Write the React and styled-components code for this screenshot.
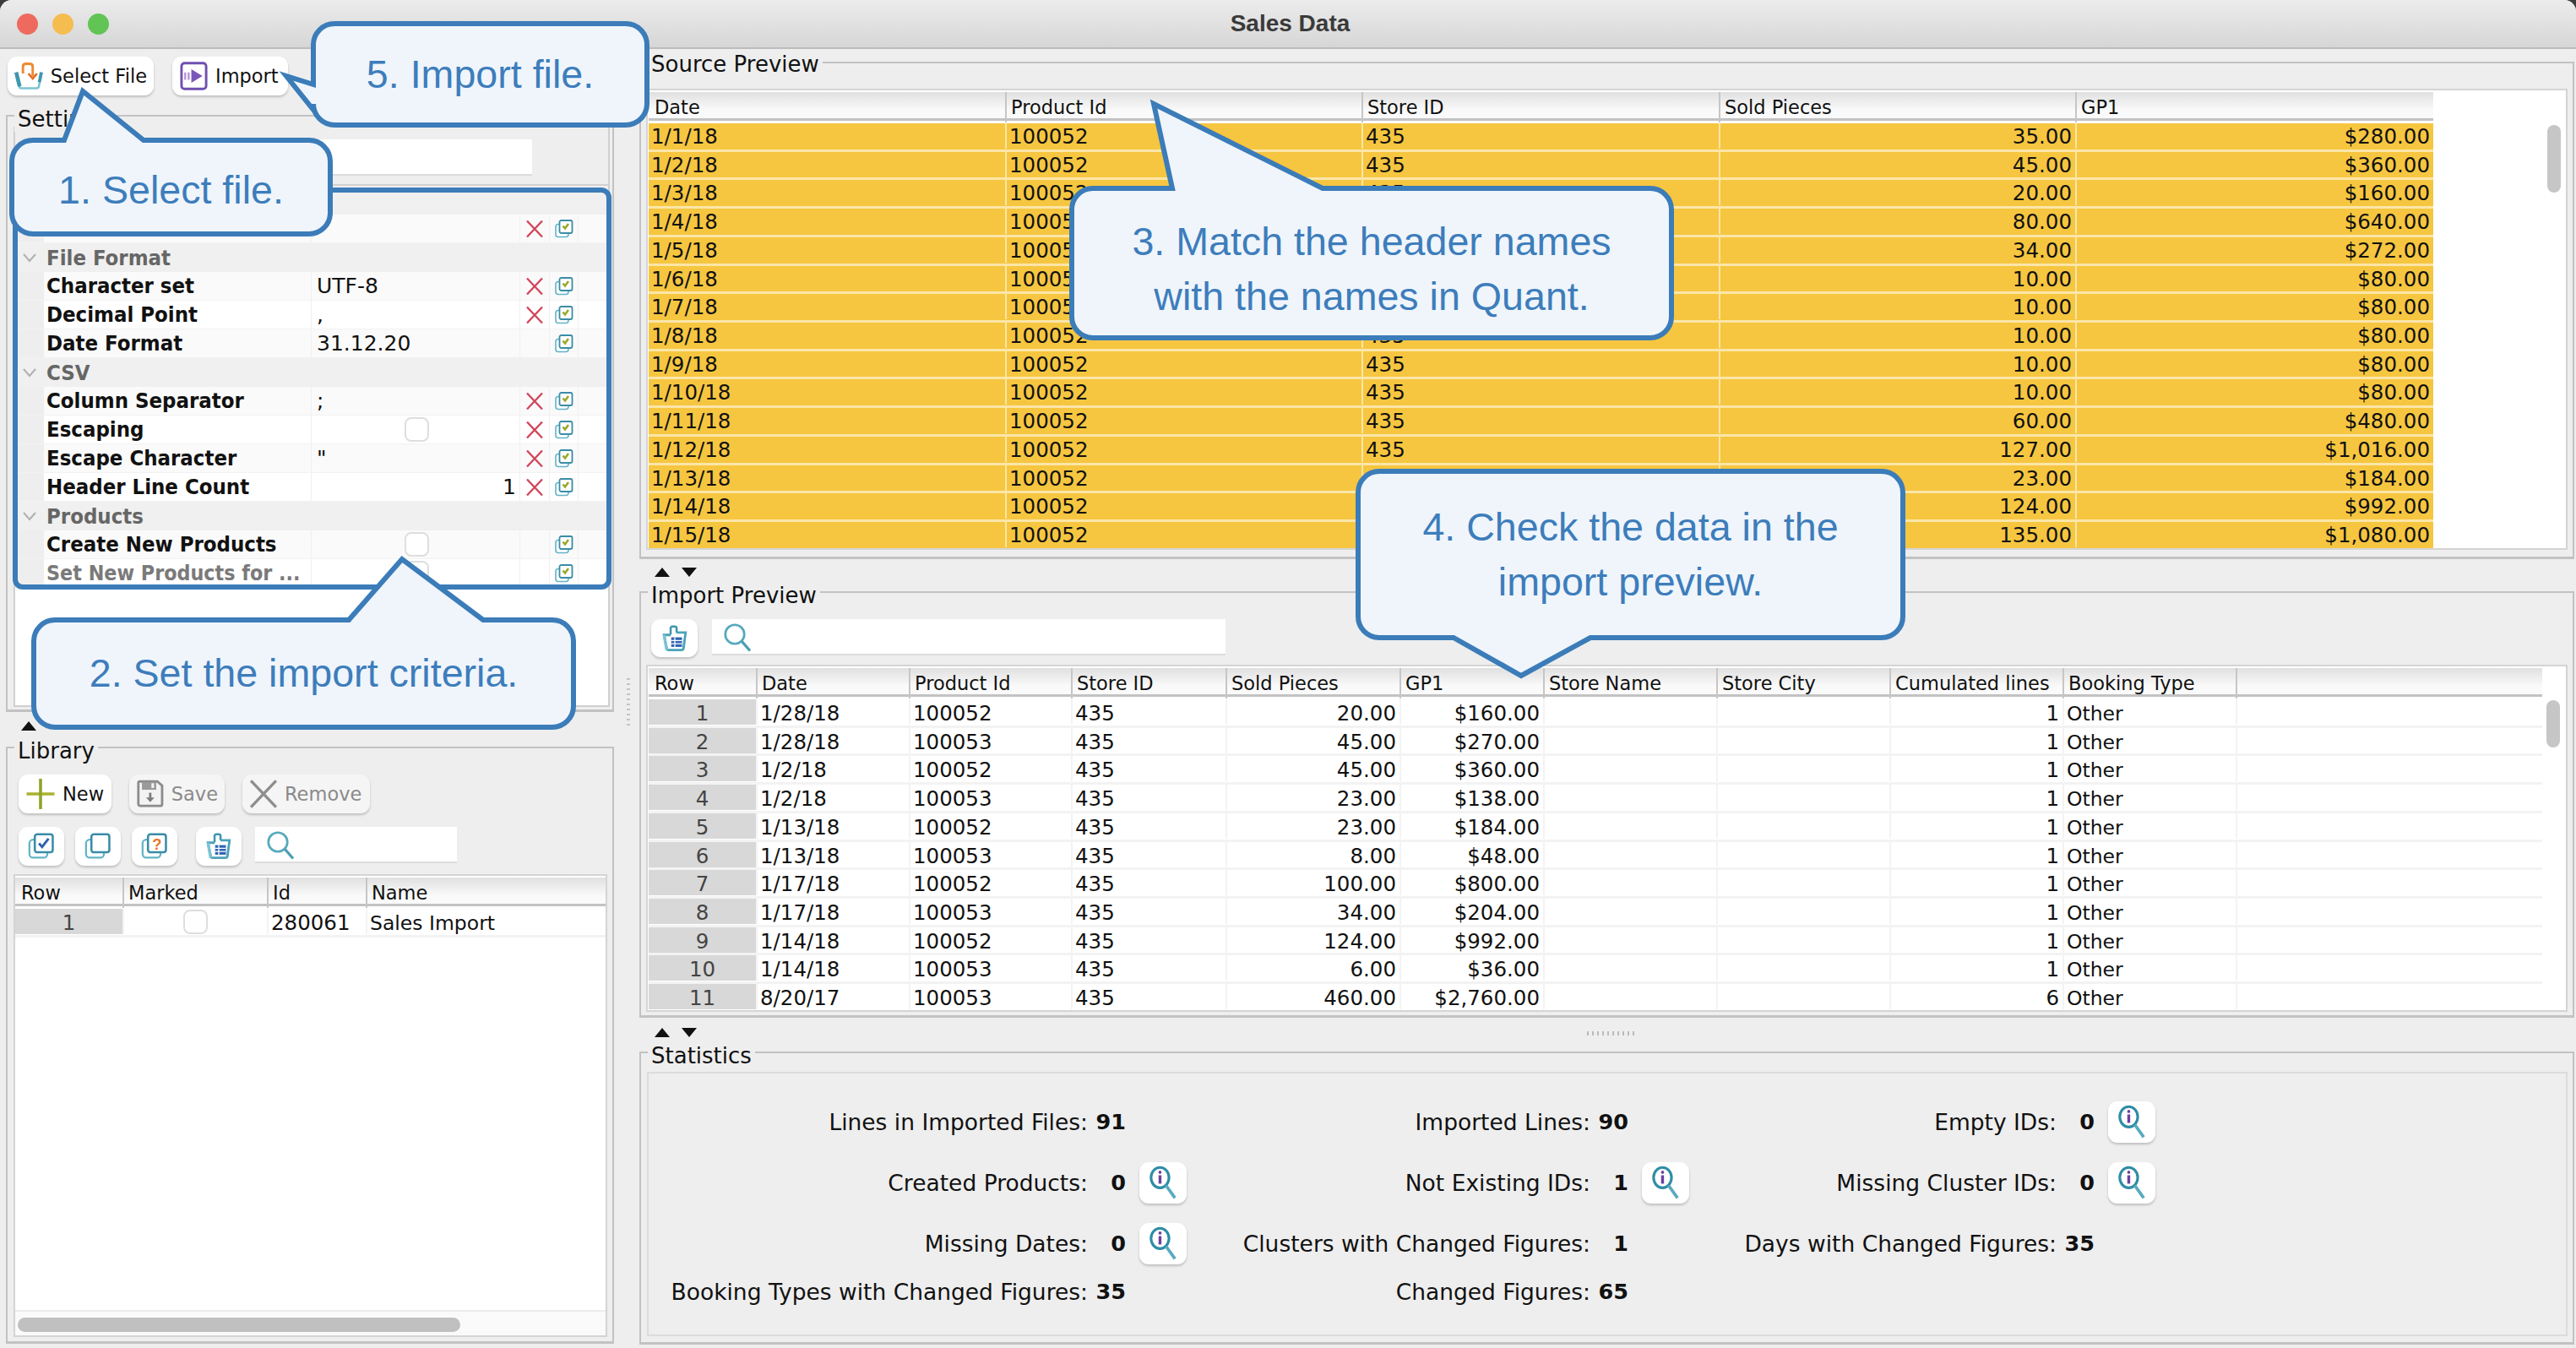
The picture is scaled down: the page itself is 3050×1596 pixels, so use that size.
import React from 'react'
import styled, { createGlobalStyle, css } from 'styled-components'

const GlobalStyle = createGlobalStyle`
  html, body { margin: 0; padding: 0; background: #3c3c3c; }
  * { box-sizing: border-box; }
  body { font-family: "DejaVu Sans", "Liberation Sans", sans-serif; color: #111; }
`

const Window = styled.div`
  position: relative;
  width: 3050px;
  height: 1596px;
  background: #eeeeee;
  border-radius: 14px 14px 0 0;
  overflow: hidden;
`

const TitleBar = styled.div`
  height: 58px;
  display: flex;
  align-items: center;
  padding: 0 20px;
  background: linear-gradient(#ececec, #d6d6d6);
  border-bottom: 2px solid #bcbcbc;
  position: relative;
`

const Lights = styled.div`
  display: flex;
  gap: 17px;
`

const Light = styled.span`
  width: 25px;
  height: 25px;
  border-radius: 50%;
  background: ${p => p.$color};
`

const TitleText = styled.div`
  flex: 1;
  text-align: center;
  font-family: "Liberation Sans", sans-serif;
  font-weight: 700;
  font-size: 28px;
  color: #3a3a3a;
  padding-right: 84px;
  margin-left: -20px;
`

const Body = styled.div`
  display: flex;
  height: 1538px;
`

const LeftColumn = styled.div`
  width: 730px;
  padding-left: 7px;
  display: flex;
  flex-direction: column;
`

const Toolbar = styled.div`
  display: flex;
  gap: 22px;
  height: 78px;
  padding: 9px 0 0 2px;
`

const Button = styled.div`
  height: ${p => p.$h || 46}px;
  width: ${p => p.$w}px;
  flex: none;
  display: flex;
  align-items: center;
  justify-content: ${p => (p.$w < 60 ? 'center' : 'flex-start')};
  gap: 8px;
  margin-right: ${p => p.$mr || 0}px;
  padding: ${p => (p.$w < 60 ? '0' : '0 8px')};
  background: ${p => (p.$off ? '#f5f5f5' : '#ffffff')};
  color: ${p => (p.$off ? '#8a8a8a' : '#111')};
  border-radius: 11px;
  box-shadow: 0 2px 3px rgba(0, 0, 0, 0.2);
  font-size: 22.5px;
  white-space: nowrap;
`

const Group = styled.section`
  position: relative;
  flex: none;
  width: ${p => p.$w}px;
  height: ${p => p.$h}px;
  border: 2px solid #c2c2c2;
  border-bottom-width: 3px;
  padding: ${p => p.$pad};
  display: flex;
  flex-direction: column;
`

const Legend = styled.div`
  position: absolute;
  top: ${p => p.$top || -12}px;
  left: 8px;
  padding: 0 4px;
  height: 30px;
  line-height: 30px;
  font-size: 26px;
  background: #eeeeee;
  color: #111;
`

const SplitRow = styled.div`
  flex: none;
  height: ${p => p.$h}px;
  display: flex;
  align-items: flex-start;
  gap: 14px;
  padding: ${p => p.$pad};
`

const Arrow = styled.span`
  width: 0;
  height: 0;
  border-left: 9px solid transparent;
  border-right: 9px solid transparent;
  ${p => (p.$down
    ? css`border-top: 11px solid #111;`
    : css`border-bottom: 11px solid #111;`)}
`

const HGrip = styled.div`
  width: 56px;
  height: 5px;
  margin: 4px 0 0 ${p => p.$left}px;
  background: repeating-linear-gradient(90deg, #bbb 0 2px, transparent 2px 6px);
`

const VSplit = styled.div`
  width: 27px;
  flex: none;
  padding: 745px 0 0 12px;
`

const VGrip = styled.div`
  width: 4px;
  height: 56px;
  background: repeating-linear-gradient(#c4c4c4 0 2px, transparent 2px 6px);
`

const SettingsPane = styled.div`
  flex: 1;
  display: flex;
  flex-direction: column;
  border: 2px solid #d0d0d0;
  border-top: none;
`

const FileRow = styled.div`
  height: 70px;
  flex: none;
  padding: 15px 0 0 130px;
`

const SearchField = styled.div`
  width: ${p => p.$w}px;
  height: ${p => p.$h || 43}px;
  flex: none;
  display: flex;
  align-items: center;
  padding-left: ${p => p.$pad || 12}px;
  background: #ffffff;
  border-bottom: 2px solid #dcdcdc;
`

const PropertyPane = styled.div`
  flex: 1;
  background: #ffffff;
  border-top: 2px solid #d0d0d0;
  margin-top: -2px;
`

const PropRow = styled.div`
  display: grid;
  grid-template-columns: 34px 317px 247px 35px 34px 1fr;
  height: 34px;
  background: ${p => (p.$alt ? '#fafafa' : '#ffffff')};
  border-bottom: 1px solid #f2f2f2;
  overflow: hidden;
`

const PropGroupRow = styled.div`
  display: flex;
  align-items: center;
  height: 34px;
  background: #f0f0f0;
  font-size: 25.5px;
  font-weight: 700;
  font-stretch: condensed;
  color: #666;
`

const Chevron = styled.span`
  width: 37px;
  flex: none;
  display: flex;
  justify-content: center;
  padding-right: 3px;
  color: #aaa;
`

const Gutter = styled.div`
  background: #eeeeee;
`

const PropName = styled.div`
  padding-left: 3px;
  font-size: ${p => (p.$muted ? 24.8 : 25.5)}px;
  line-height: 33px;
  font-weight: 700;
  font-stretch: condensed;
  color: ${p => (p.$muted ? '#7a7a7a' : '#111')};
  white-space: nowrap;
  border-right: 1px solid #f0f0f0;
`

const PropValue = styled.div`
  display: flex;
  align-items: center;
  justify-content: ${p => p.$align || 'flex-start'};
  padding: 0 4px 0 6px;
  font-size: 25px;
  border-right: 1px solid #f0f0f0;
`

const IconCell = styled.div`
  display: flex;
  align-items: center;
  justify-content: center;
  border-right: 1px solid #f0f0f0;
`

const CheckBox = styled.span`
  width: 29px;
  height: 29px;
  background: #ffffff;
  border: 2px solid #dedede;
  border-radius: 8px;
`

const ButtonRow = styled.div`
  display: flex;
  gap: ${p => p.$gap}px;
  height: ${p => p.$h}px;
  flex: none;
  padding-left: ${p => p.$left || 0}px;
  margin-top: ${p => p.$top || 0}px;
`

const TableBox = styled.div`
  flex: 1;
  min-height: 0;
  position: relative;
  display: flex;
  background: #ffffff;
  border: 2px solid #d4d4d4;
  margin-top: ${p => p.$top || 0}px;
  padding: ${p => p.$pad || '2px 0 0 1px'};
  overflow: hidden;
`

const TableArea = styled.div`
  width: ${p => p.$w}px;
  flex: none;
  display: flex;
  flex-direction: column;
`

const HeaderRow = styled.div`
  display: grid;
  grid-template-columns: ${p => p.$cols};
  height: 34px;
  flex: none;
  background: linear-gradient(#e0e0e0, #fafafa 70%);
  border-bottom: 3px solid #c2c2c2;
  margin-bottom: 3px;
`

const HeaderCell = styled.div`
  padding-left: 5px;
  line-height: 36px;
  font-size: 22.5px;
  color: #111;
  border-left: 2px solid ${p => (p.$first ? 'transparent' : '#c6c6c6')};
  white-space: nowrap;
`

const DataRow = styled.div`
  display: grid;
  grid-template-columns: ${p => p.$cols};
  height: 33.72px;
  flex: none;
  background: ${p => (p.$hot ? '#f6c640' : '#ffffff')};
  border-bottom: 3px solid ${p => (p.$hot ? '#fbe6a8' : '#f3f3f3')};
`

const Cell = styled.div`
  padding: 0 4px 0 3px;
  line-height: ${p => (p.$hot ? 32 : 34)}px;
  height: 30px;
  font-size: ${p => (p.$word ? 23.5 : 24.5)}px;
  color: #111;
  text-align: ${p => (p.$right ? 'right' : 'left')};
  border-left: 2px solid ${p => (p.$hot ? '#fbe6a8' : '#f3f3f3')};
  white-space: nowrap;
  ${p => p.$bare && css`border-left: none;`}
`

const CheckCell = styled(Cell)`
  display: flex;
  justify-content: center;
  align-items: center;
`

const RowHead = styled.div`
  background: #d8d8d8;
  text-align: center;
  line-height: 34px;
  height: 30px;
  font-size: 24.5px;
  color: #444;
`

const ScrollTrack = styled.div`
  flex: 1;
  display: flex;
  justify-content: flex-end;
  padding: ${p => p.$pad};
`

const ScrollThumb = styled.div`
  width: 16px;
  height: ${p => p.$h}px;
  border-radius: 8px;
  background: #c6c6c6;
`

const HScrollBar = styled.div`
  position: absolute;
  left: 0;
  right: 0;
  bottom: 0;
  height: 30px;
  padding: 7px 0 0 3px;
  background: #fafafa;
  border-top: 2px solid #ececec;
`

const HThumb = styled.div`
  width: 524px;
  height: 17px;
  border-radius: 9px;
  background: #c0c0c0;
`

const RightColumn = styled.div`
  width: 2291px;
  display: flex;
  flex-direction: column;
  padding-top: 15px;
`

const StatsPane = styled.div`
  flex: 1;
  display: grid;
  grid-template-columns: 637px 595px 552px;
  grid-template-rows: 72px 72px 72px 42px;
  align-items: center;
  padding: 21px 0 0 0;
  border: 2px solid #dcdcdc;
`

const StatCell = styled.div`
  display: flex;
  align-items: center;
  justify-content: flex-end;
`

const StatLabel = styled.span`
  font-size: 26.5px;
  white-space: nowrap;
`

const StatValue = styled.span`
  width: 45px;
  flex: none;
  text-align: right;
  font-size: 25.5px;
  font-weight: 700;
`

const StatSlot = styled.span`
  width: 72px;
  flex: none;
  display: flex;
  justify-content: flex-end;
`

const CalloutBody = styled.div`
  position: absolute;
  left: ${p => p.$x}px;
  top: ${p => p.$y}px;
  width: ${p => p.$w}px;
  height: ${p => p.$h}px;
  display: flex;
  flex-direction: column;
  align-items: center;
  justify-content: center;
  padding-top: ${p => p.$dy || 0}px;
  font-family: "Liberation Sans", Arial, sans-serif;
  font-size: 46.6px;
  line-height: 65px;
  color: #3d7dbb;
  white-space: nowrap;
`

const CalloutShape = styled.svg`
  position: absolute;
  left: 0;
  top: 0;
  overflow: visible;
`

const CalloutText = styled.span`
  position: relative;
`

const Highlight = styled.div`
  position: absolute;
  left: 15px;
  top: 222px;
  width: 709px;
  height: 476px;
  border: 6px solid #3b7cb9;
  border-radius: 12px;
`

/* icons */

const PagesIcon = ({ size = 24, mark }) => (
  <svg width={size} height={size} viewBox="0 0 24 24" fill="none">
    <rect x="2" y="6.5" width="15" height="15" rx="3" fill="#fff" stroke="#62b4c6" strokeWidth="1.6" />
    <rect x="6.5" y="2" width="15" height="15" rx="2" fill="#fff" stroke="#3a8ca6" strokeWidth="1.8" />
    {mark === 'check' && <path d="M10 9.5l2.6 3L18 5.5" stroke="#2f5fb0" strokeWidth="2" />}
    {mark === 'green' && <path d="M10.5 8.5l2.5 3 4-5.5" stroke="#9aa82a" strokeWidth="2.6" />}
    {mark === 'help' && <text x="14" y="14.5" textAnchor="middle" fontSize="13" fontWeight="700" fill="#e8772e" fontFamily="Liberation Sans, sans-serif">?</text>}
  </svg>
)

const BagIcon = ({ size = 30 }) => (
  <svg width={size} height={size} viewBox="0 0 24 24" fill="none">
    <path d="M8.5 9V3.5c0-1 .6-1.5 1.5-1.5h2c1 0 1.5.6 1.5 1.5V7" stroke="#3f97ae" strokeWidth="1.8" />
    <path d="M13.5 7h7.5l-1.7 13c-.1 1-.8 1.6-1.8 1.6H7c-1 0-1.7-.6-1.8-1.6L3 9h5.5" fill="#fff" stroke="#4aa3b9" strokeWidth="2" />
    <path d="M3 9l2.2 12.6" stroke="#7cc3d3" strokeWidth="2.4" />
    <rect x="9" y="11" width="9" height="8" fill="#2f63b5" />
    <path d="M9 13.6h9M9 16.3h9M12 11v8" stroke="#fff" strokeWidth="0.9" />
  </svg>
)

const SearchIcon = ({ size = 36 }) => (
  <svg width={size} height={size} viewBox="0 0 24 24" fill="none">
    <circle cx="10" cy="10" r="7.5" stroke="#55a9bd" strokeWidth="1.8" />
    <path d="M15.5 15.5L22 23" stroke="#4b9fb4" strokeWidth="2.2" />
  </svg>
)

const InfoIcon = () => (
  <svg width="34" height="40" viewBox="0 0 24 28" fill="none">
    <ellipse cx="9.5" cy="10" rx="7.5" ry="8.5" stroke="#2f8da6" strokeWidth="2.2" />
    <path d="M14.5 16.5L22 27" stroke="#58aac0" strokeWidth="2.6" />
    <circle cx="9.5" cy="5.5" r="1.3" fill="#6b3fa0" />
    <rect x="8.3" y="8" width="2.4" height="7" fill="#6b3fa0" />
  </svg>
)

const RedX = () => (
  <svg width="22" height="22" viewBox="0 0 22 22" fill="none">
    <path d="M2 1.5l18 19M20 1.5l-18 19" stroke="#d1475c" strokeWidth="2.4" />
  </svg>
)

const BasketIcon = () => (
  <svg width="38" height="38" viewBox="0 0 24 24" fill="none">
    <path d="M1.5 9l2.5 11.5c.2.9.8 1.5 1.7 1.5h12.6c.9 0 1.5-.6 1.7-1.5L22.5 9" stroke="#7cc3d3" strokeWidth="1.8" />
    <path d="M1.5 9l2.8 11.5" stroke="#3f97ae" strokeWidth="3.2" />
    <path d="M22 9l-1.6 8" stroke="#3f97ae" strokeWidth="2.6" />
    <path d="M7 10V4.5C7 3 8 2 9.5 2h3C14 2 15 3 15 4.5V12" stroke="#ee8a2e" strokeWidth="2" />
    <path d="M11.5 10l3.5 4 3.5-4" stroke="#e2702a" strokeWidth="1.8" />
  </svg>
)

const ImportIcon = () => (
  <svg width="35" height="36" viewBox="0 0 24 24" fill="none">
    <rect x="2" y="1.5" width="20" height="21" rx="2.5" stroke="#6f4fb0" strokeWidth="2" />
    <path d="M10 6.5l9 5.5-9 5.5z" fill="#7b57b8" />
    <path d="M5 9v6M7.8 9v6" stroke="#b58fd8" strokeWidth="1.6" />
  </svg>
)

const PlusIcon = () => (
  <svg width="36" height="36" viewBox="0 0 24 24" fill="none">
    <path d="M1 12h22" stroke="#a9b32f" strokeWidth="2.4" />
    <path d="M12 0v24" stroke="#8da529" strokeWidth="2.4" />
  </svg>
)

const SaveIcon = () => (
  <svg width="34" height="36" viewBox="0 0 24 24" fill="none">
    <path d="M3 1.5h15l4 3.5v15.5c0 1-.6 1.6-1.6 1.6H3.6c-1 0-1.6-.6-1.6-1.6V3c0-1 .4-1.5 1-1.5z" fill="#f3f3f3" stroke="#8c8c8c" strokeWidth="2" />
    <rect x="5" y="2" width="12" height="6.5" fill="#9a9a9a" />
    <rect x="13" y="3" width="2.2" height="4" fill="#f3f3f3" />
    <path d="M12 11v6" stroke="#7e7e7e" strokeWidth="2" />
    <path d="M8.5 15h7l-3.5 4z" fill="#7e7e7e" />
  </svg>
)

const GrayX = () => (
  <svg width="34" height="34" viewBox="0 0 24 24" fill="none">
    <path d="M1.5 1l21 22M22.5 1l-21 22" stroke="#8e8e8e" strokeWidth="2.4" />
  </svg>
)

const Callout = ({ x, y, w, h, dy, tail, children }) => {
  const s = 3
  const r = 25
  const x0 = s
  const y0 = s
  const x1 = w - s
  const y1 = h - s
  const tip = `L${tail.tx - x} ${tail.ty - y}`
  let top = ''
  let bottom = ''
  let left = ''
  if (tail.side === 'top') top = `L${tail.a - x} ${y0} ${tip} L${tail.b - x} ${y0}`
  if (tail.side === 'bottom') bottom = `L${tail.b - x} ${y1} ${tip} L${tail.a - x} ${y1}`
  if (tail.side === 'left') left = `L${x0} ${tail.b - y} ${tip} L${x0} ${tail.a - y}`
  const d = `M${x0 + r} ${y0} ${top} L${x1 - r} ${y0} A${r} ${r} 0 0 1 ${x1} ${y0 + r} L${x1} ${y1 - r} A${r} ${r} 0 0 1 ${x1 - r} ${y1} ${bottom} L${x0 + r} ${y1} A${r} ${r} 0 0 1 ${x0} ${y1 - r} ${left} L${x0} ${y0 + r} A${r} ${r} 0 0 1 ${x0 + r} ${y0} Z`
  return (
    <CalloutBody $x={x} $y={y} $w={w} $h={h} $dy={dy}>
      <CalloutShape width={w} height={h}>
        <path d={d} fill="#eff5fb" stroke="#3b7cb9" strokeWidth="6" strokeLinejoin="miter" />
      </CalloutShape>
      {children.map(line => <CalloutText key={line}>{line}</CalloutText>)}
    </CalloutBody>
  )
}

/* data */

const sourceCols = '422px 422px 423px 422px 424px'
const sourceRows = [
  [35, 280], [45, 360], [20, 160], [80, 640], [34, 272], [10, 80], [10, 80], [10, 80],
  [10, 80], [10, 80], [60, 480], [127, '1,016'], [23, 184], [124, 992], [135, '1,080'],
]

const importCols = '127px 181px 192px 183px 206px 170px 205px 205px 205px 205px 363px'
const importHead = ['Row', 'Date', 'Product Id', 'Store ID', 'Sold Pieces', 'GP1', 'Store Name', 'Store City', 'Cumulated lines', 'Booking Type', '']
const importRows = [
  ['1/28/18', '100052', '20.00', '$160.00', 1],
  ['1/28/18', '100053', '45.00', '$270.00', 1],
  ['1/2/18', '100052', '45.00', '$360.00', 1],
  ['1/2/18', '100053', '23.00', '$138.00', 1],
  ['1/13/18', '100052', '23.00', '$184.00', 1],
  ['1/13/18', '100053', '8.00', '$48.00', 1],
  ['1/17/18', '100052', '100.00', '$800.00', 1],
  ['1/17/18', '100053', '34.00', '$204.00', 1],
  ['1/14/18', '100052', '124.00', '$992.00', 1],
  ['1/14/18', '100053', '6.00', '$36.00', 1],
  ['8/20/17', '100053', '460.00', '$2,760.00', 6],
]

const libraryCols = '127px 171px 117px 1fr'

const properties = [
  { group: '' },
  { name: '', x: true },
  { group: 'File Format' },
  { name: 'Character set', value: 'UTF-8', x: true },
  { name: 'Decimal Point', value: ',', x: true },
  { name: 'Date Format', value: '31.12.20' },
  { group: 'CSV' },
  { name: 'Column Separator', value: ';', x: true },
  { name: 'Escaping', check: true, x: true },
  { name: 'Escape Character', value: '"', x: true },
  { name: 'Header Line Count', value: '1', right: true, x: true },
  { group: 'Products' },
  { name: 'Create New Products', check: true },
  { name: 'Set New Products for ...', check: true, muted: true },
]

const stats = [
  ['Lines in Imported Files:', '91', false],
  ['Imported Lines:', '90', false],
  ['Empty IDs:', '0', true],
  ['Created Products:', '0', true],
  ['Not Existing IDs:', '1', true],
  ['Missing Cluster IDs:', '0', true],
  ['Missing Dates:', '0', true],
  ['Clusters with Changed Figures:', '1', false],
  ['Days with Changed Figures:', '35', false],
  ['Booking Types with Changed Figures:', '35', false],
  ['Changed Figures:', '65', false],
]

function PropertyRows() {
  let alt = false
  return properties.map((row, i) => {
    if ('group' in row) {
      alt = false
      return (
        <PropGroupRow key={i}>
          <Chevron>
            <svg width="18" height="12" viewBox="0 0 18 12" fill="none">
              <path d="M2 2l7 8 7-8" stroke="#b0b0b0" strokeWidth="2" />
            </svg>
          </Chevron>
          {row.group}
        </PropGroupRow>
      )
    }
    alt = !alt
    return (
      <PropRow key={i} $alt={alt}>
        <Gutter />
        <PropName $muted={row.muted}>{row.name}</PropName>
        <PropValue $align={row.check ? 'center' : row.right ? 'flex-end' : 'flex-start'}>
          {row.check ? <CheckBox /> : row.value}
        </PropValue>
        <IconCell>{row.x && <RedX />}</IconCell>
        <IconCell><PagesIcon mark="green" /></IconCell>
      </PropRow>
    )
  })
}

export default function App() {
  return (
    <Window>
      <GlobalStyle />
      <TitleBar>
        <Lights>
          <Light $color="#ee6a5f" />
          <Light $color="#f5bd4f" />
          <Light $color="#61c454" />
        </Lights>
        <TitleText>Sales Data</TitleText>
      </TitleBar>

      <Body>
        <LeftColumn>
          <Toolbar>
            <Button $w={173}><BasketIcon />Select File</Button>
            <Button $w={137}><ImportIcon />Import</Button>
          </Toolbar>

          <Group $w={720} $h={707} $pad="12px 3px 3px 7px">
            <Legend>Settings</Legend>
            <SettingsPane>
              <FileRow><SearchField $w={482} /></FileRow>
              <PropertyPane><PropertyRows /></PropertyPane>
            </SettingsPane>
          </Group>

          <SplitRow $h={41} $pad="11px 0 0 18px"><Arrow /></SplitRow>

          <Group $w={720} $h={707} $pad="31px 6px 5px 7px">
            <Legend>Library</Legend>
            <ButtonRow $gap={21} $h={46} $left={6}>
              <Button $w={110}><PlusIcon />New</Button>
              <Button $w={113} $off><SaveIcon />Save</Button>
              <Button $w={151} $off><GrayX />Remove</Button>
            </ButtonRow>
            <ButtonRow $gap={13} $h={56} $left={6} $top={16}>
              <Button $w={54}><PagesIcon size={34} mark="check" /></Button>
              <Button $w={54}><PagesIcon size={34} /></Button>
              <Button $w={54} $mr={9}><PagesIcon size={34} mark="help" /></Button>
              <Button $w={54} $mr={3}><BagIcon size={34} /></Button>
              <SearchField $w={239}><SearchIcon /></SearchField>
            </ButtonRow>
            <TableBox $pad="2px 0 0 0">
              <TableArea $w={700}>
                <HeaderRow $cols={libraryCols}>
                  <HeaderCell $first>Row</HeaderCell>
                  <HeaderCell>Marked</HeaderCell>
                  <HeaderCell>Id</HeaderCell>
                  <HeaderCell>Name</HeaderCell>
                </HeaderRow>
                <DataRow $cols={libraryCols}>
                  <RowHead>1</RowHead>
                  <CheckCell><CheckBox /></CheckCell>
                  <Cell>280061</Cell>
                  <Cell $word>Sales Import</Cell>
                </DataRow>
              </TableArea>
              <HScrollBar><HThumb /></HScrollBar>
            </TableBox>
          </Group>
        </LeftColumn>

        <VSplit><VGrip /></VSplit>

        <RightColumn>
          <Group $w={2291} $h={589} $pad="30px 6px 8px 6px">
            <Legend $top={-14}>Source Preview</Legend>
            <TableBox>
              <TableArea $w={2113}>
                <HeaderRow $cols={sourceCols}>
                  <HeaderCell $first>Date</HeaderCell>
                  <HeaderCell>Product Id</HeaderCell>
                  <HeaderCell>Store ID</HeaderCell>
                  <HeaderCell>Sold Pieces</HeaderCell>
                  <HeaderCell>GP1</HeaderCell>
                </HeaderRow>
                {sourceRows.map(([pieces, gp], i) => (
                  <DataRow key={i} $cols={sourceCols} $hot>
                    <Cell $hot $bare>{`1/${i + 1}/18`}</Cell>
                    <Cell $hot>100052</Cell>
                    <Cell $hot>435</Cell>
                    <Cell $hot $right>{`${pieces}.00`}</Cell>
                    <Cell $hot $right>{`$${gp}.00`}</Cell>
                  </DataRow>
                ))}
              </TableArea>
              <ScrollTrack $pad="39px 6px 0 0"><ScrollThumb $h={80} /></ScrollTrack>
            </TableBox>
          </Group>

          <SplitRow $h={38} $pad="10px 0 0 18px"><Arrow /><Arrow $down /></SplitRow>

          <Group $w={2291} $h={505} $pad="31px 6px 4px 6px">
            <Legend>Import Preview</Legend>
            <ButtonRow $gap={17} $h={45} $left={6}>
              <Button $w={55} $h={45}><BagIcon size={34} /></Button>
              <SearchField $w={608} $h={43}><SearchIcon /></SearchField>
            </ButtonRow>
            <TableBox $top={9}>
              <TableArea $w={2242}>
                <HeaderRow $cols={importCols}>
                  {importHead.map((h, i) => <HeaderCell key={i} $first={i === 0}>{h}</HeaderCell>)}
                </HeaderRow>
                {importRows.map((row, i) => (
                  <DataRow key={i} $cols={importCols}>
                    <RowHead>{i + 1}</RowHead>
                    <Cell>{row[0]}</Cell>
                    <Cell>{row[1]}</Cell>
                    <Cell>435</Cell>
                    <Cell $right>{row[2]}</Cell>
                    <Cell $right>{row[3]}</Cell>
                    <Cell />
                    <Cell />
                    <Cell $right>{row[4]}</Cell>
                    <Cell $word>Other</Cell>
                    <Cell />
                  </DataRow>
                ))}
              </TableArea>
              <ScrollTrack $pad="38px 7px 0 0"><ScrollThumb $h={56} /></ScrollTrack>
            </TableBox>
          </Group>

          <SplitRow $h={40} $pad="12px 0 0 18px">
            <Arrow />
            <Arrow $down />
            <HGrip $left={1040} />
          </SplitRow>

          <Group $w={2291} $h={347} $pad="22px 6px 7px 7px">
            <Legend>Statistics</Legend>
            <StatsPane>
              {stats.map(([label, value, info]) => (
                <StatCell key={label}>
                  <StatLabel>{label}</StatLabel>
                  <StatValue>{value}</StatValue>
                  <StatSlot>{info && <Button $w={56} $h={49}><InfoIcon /></Button>}</StatSlot>
                </StatCell>
              ))}
            </StatsPane>
          </Group>
        </RightColumn>
      </Body>

      <Highlight />
      <Callout x={368} y={25} w={401} h={126} tail={{ side: 'left', a: 100, b: 130, tx: 339, ty: 90 }}>
        {['5. Import file.']}
      </Callout>
      <Callout x={11} y={163} w={383} h={117} dy={7} tail={{ side: 'top', a: 76, b: 170, tx: 98, ty: 108 }}>
        {['1. Select file.']}
      </Callout>
      <Callout x={37} y={731} w={645} h={133} tail={{ side: 'top', a: 413, b: 572, tx: 476, ty: 662 }}>
        {['2. Set the import criteria.']}
      </Callout>
      <Callout x={1266} y={220} w={716} h={183} dy={14} tail={{ side: 'top', a: 1388, b: 1566, tx: 1366, ty: 123 }}>
        {['3. Match the header names', 'with the names in Quant.']}
      </Callout>
      <Callout x={1605} y={555} w={651} h={203} tail={{ side: 'bottom', a: 1721, b: 1883, tx: 1801, ty: 800 }}>
        {['4. Check the data in the', 'import preview.']}
      </Callout>
    </Window>
  )
}
